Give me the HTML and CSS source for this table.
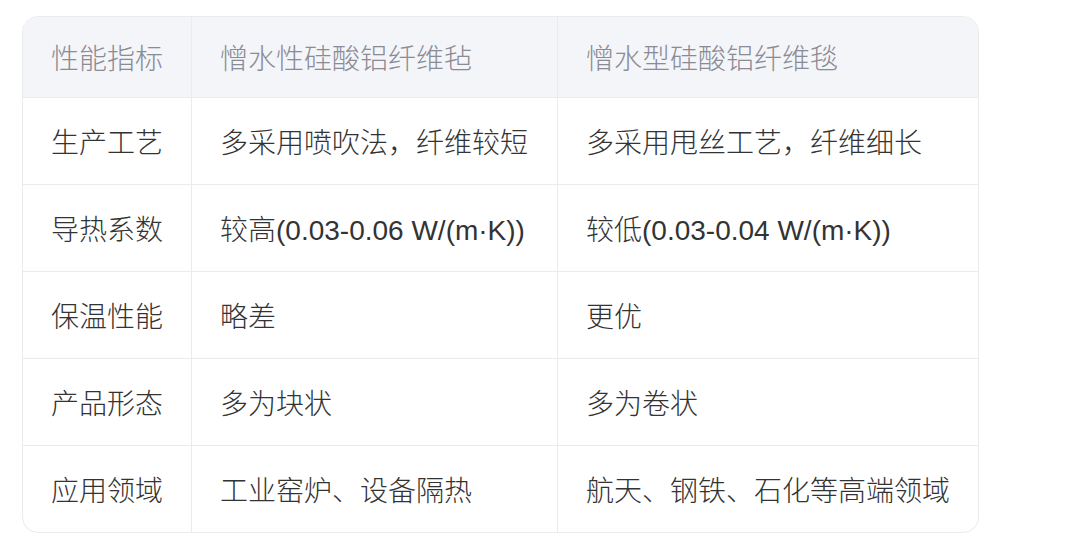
FILE: index.html
```html
<!DOCTYPE html>
<html lang="zh">
<head>
<meta charset="utf-8">
<link rel="stylesheet" href="styles.css">
</head>
<body>
<div class="wrap">
<table class="cmp">
<colgroup><col class="c1"><col class="c2"><col class="c3"></colgroup>
<thead>
<tr><th>性能指标</th><th>憎水性硅酸铝纤维毡</th><th>憎水型硅酸铝纤维毯</th></tr>
</thead>
<tbody>
<tr><td>生产工艺</td><td>多采用喷吹法，纤维较短</td><td>多采用甩丝工艺，纤维细长</td></tr>
<tr><td>导热系数</td><td>较高(0.03-0.06 W/(m·K))</td><td>较低(0.03-0.04 W/(m·K))</td></tr>
<tr><td>保温性能</td><td>略差</td><td>更优</td></tr>
<tr><td>产品形态</td><td>多为块状</td><td>多为卷状</td></tr>
<tr><td>应用领域</td><td>工业窑炉、设备隔热</td><td>航天、钢铁、石化等高端领域</td></tr>
</tbody>
</table>
</div>
</body>
</html>
```
FILE: styles.css
```css
html, body { margin: 0; padding: 0; background: #fff; }
.wrap { padding: 16px 0 0 22px; }
.cmp {
  width: 955px;
  border-collapse: separate;
  border-spacing: 0;
  border: 1px solid #ebebeb;
  border-radius: 16px;
  overflow: hidden;
  table-layout: fixed;
  font-family: "Liberation Sans", "Noto Sans CJK SC", sans-serif;
  font-size: 28px;
  font-weight: 300;
}
.c1 { width: 169px; }
.c2 { width: 366px; }
.c3 { width: 420px; }
.cmp th, .cmp td {
  text-align: left;
  font-weight: 300;
  padding: 0 0 0 28px;
  border-right: 1px solid #ebebeb;
  border-bottom: 1px solid #ebebeb;
  white-space: nowrap;
}
.cmp th:last-child, .cmp td:last-child { border-right: none; }
.cmp tbody tr:last-child td { border-bottom: none; }
.cmp th {
  background: #f4f5f9;
  color: #8a8b94;
  height: 80px;
}
.cmp td {
  color: #333;
  height: 86px;
}
```
